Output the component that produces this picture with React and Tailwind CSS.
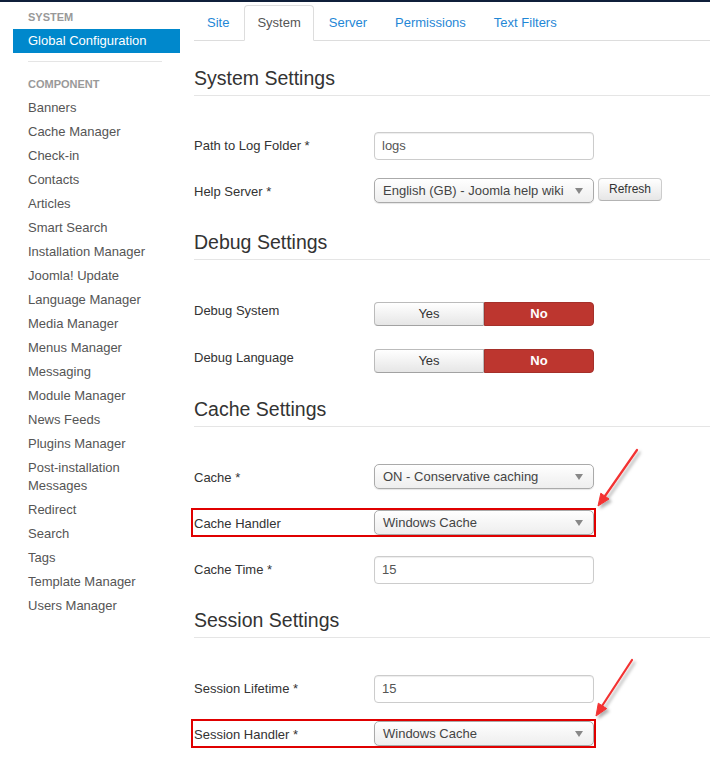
const sidebarItems = [
  'Banners',
  'Cache Manager',
  'Check-in',
  'Contacts',
  'Articles',
  'Smart Search',
  'Installation Manager',
  'Joomla! Update',
  'Language Manager',
  'Media Manager',
  'Menus Manager',
  'Messaging',
  'Module Manager',
  'News Feeds',
  'Plugins Manager',
  'Post-installation Messages',
  'Redirect',
  'Search',
  'Tags',
  'Template Manager',
  'Users Manager',
]

const tabs = ['Site', 'System', 'Server', 'Permissions', 'Text Filters']

function Legend({ className, children }) {
  return (
    <div className={`text-[19.5px] leading-6 pb-[5px] border-b border-[#e5e5e5] text-[#333] ${className}`}>
      {children}
    </div>
  )
}

function Row({ label, className, labelClass = 'pt-[5px]', mark, children }) {
  return (
    <div className={`relative flex items-start ${className}`}>
      <div className={`w-[180px] shrink-0 leading-[18px] text-[#333] ${labelClass}`}>{label}</div>
      <div className="flex gap-1">{children}</div>
      {mark && <div className="absolute -left-[3px] -top-[2px] w-[405px] h-[29px] border-2 border-[#e00000]" />}
    </div>
  )
}

function TextInput({ value }) {
  return (
    <div className="w-[220px] h-[28px] px-[7px] leading-[26px] border border-[#ccc] rounded-[4px] bg-white text-[#555] shadow-[inset_0_1px_1px_rgba(0,0,0,0.075)]">
      {value}
    </div>
  )
}

function Select({ value }) {
  return (
    <div className="flex items-center justify-between w-[220px] h-[25px] pl-2 pr-[10px] border border-[#aaa] rounded-[5px] bg-linear-to-b from-white via-[#f6f6f6] to-[#eeeeee] text-[#444] shadow-[0_1px_1px_rgba(0,0,0,0.1)]">
      <span className="leading-[23px]">{value}</span>
      <svg width="8" height="6" viewBox="0 0 8 6">
        <path d="M0 0 L8 0 L4 6 Z" fill="#888" />
      </svg>
    </div>
  )
}

function Toggle() {
  return (
    <div className="flex h-6">
      <div className="w-[110px] h-6 leading-[22px] text-center border border-[#bbb] border-b-[#a2a2a2] rounded-l-[4px] bg-linear-to-b from-white to-[#e6e6e6] text-[#333]">
        Yes
      </div>
      <div className="w-[110px] h-6 leading-[22px] text-center border border-[#a5302a] rounded-r-[4px] bg-[#bd362f] text-white font-bold">
        No
      </div>
    </div>
  )
}

function Arrows() {
  return (
    <svg className="absolute top-0 left-0 pointer-events-none" width="710" height="779" viewBox="0 0 710 779">
      <defs>
        <filter id="shade" x="-50%" y="-50%" width="200%" height="200%">
          <feDropShadow dx="2.5" dy="2.5" stdDeviation="1.5" floodColor="#000" floodOpacity="0.3" />
        </filter>
      </defs>
      <g filter="url(#shade)" fill="#f33333" stroke="#f33333">
        <line x1="637" y1="450" x2="605" y2="496" strokeWidth="2.2" strokeLinecap="round" />
        <path d="M598 506 L609 499 L600.8 493.2 Z" strokeWidth="1" />
        <line x1="632" y1="660" x2="602" y2="706" strokeWidth="2.2" strokeLinecap="round" />
        <path d="M596 716 L606.7 708.6 L598.3 703.2 Z" strokeWidth="1" />
      </g>
    </svg>
  )
}

export default function App() {
  return (
    <div className="relative w-[710px] h-[779px] overflow-hidden bg-white font-['Liberation_Sans',Arial,sans-serif] text-[13px]">
      <div className="h-[2px] bg-[#0f1f3a]" />
      <div className="flex pl-[13px]">
        <div className="w-[167px] shrink-0">
          <div className="mt-[6px] pl-[15px] leading-[18px] text-[11px] font-bold text-[#999]">SYSTEM</div>
          <div className="mt-[3px] h-6 pl-[15px] leading-6 bg-[#0088cc] text-white">Global Configuration</div>
          <div className="mt-2 ml-[15px] mr-[18px] h-px bg-[#e5e5e5]" />
          <div className="mt-[13px] pl-[15px] leading-[18px] text-[11px] font-bold text-[#999]">COMPONENT</div>
          <ul className="mt-[3px]">
            {sidebarItems.map((item) => (
              <li key={item} className="px-[15px] py-[3px] leading-[18px] text-[#555]">
                {item}
              </li>
            ))}
          </ul>
        </div>

        <div className="flex-1 ml-[14px]">
          <ul className="mt-[3px] flex border-b border-[#ddd]">
            {tabs.map((t) => (
              <li key={t} className="-mb-px mr-[2px]">
                <span
                  className={
                    t === 'System'
                      ? 'block px-3 py-2 leading-[18px] border border-[#ddd] border-b-white rounded-t-[4px] bg-white text-[#555]'
                      : 'block px-3 py-2 leading-[18px] border border-transparent text-[#1f87d6]'
                  }
                >
                  {t}
                </span>
              </li>
            ))}
          </ul>

          <Legend className="mt-[25px]">System Settings</Legend>
          <Row className="mt-[36px]" label="Path to Log Folder *">
            <TextInput value="logs" />
          </Row>
          <Row className="mt-[18px]" label="Help Server *">
            <Select value="English (GB) - Joomla help wiki" />
            <div className="h-[23px] px-[10px] leading-[21px] text-[12px] border border-[#ccc] border-b-[#b3b3b3] rounded-[4px] bg-linear-to-b from-white to-[#e6e6e6] text-[#333]">
              Refresh
            </div>
          </Row>

          <Legend className="mt-[27px]">Debug Settings</Legend>
          <Row className="mt-[42px]" label="Debug System" labelClass="pt-0">
            <Toggle />
          </Row>
          <Row className="mt-[23px]" label="Debug Language" labelClass="pt-0">
            <Toggle />
          </Row>

          <Legend className="mt-[24px]">Cache Settings</Legend>
          <Row className="mt-[37px]" label="Cache *">
            <Select value="ON - Conservative caching" />
          </Row>
          <Row className="mt-[21px]" label="Cache Handler" mark>
            <Select value="Windows Cache" />
          </Row>
          <Row className="mt-[21px]" label="Cache Time *">
            <TextInput value="15" />
          </Row>

          <Legend className="mt-[24px]">Session Settings</Legend>
          <Row className="mt-[37px]" label="Session Lifetime *">
            <TextInput value="15" />
          </Row>
          <Row className="mt-[18px]" label="Session Handler *" mark>
            <Select value="Windows Cache" />
          </Row>
        </div>
      </div>
      <Arrows />
    </div>
  )
}
